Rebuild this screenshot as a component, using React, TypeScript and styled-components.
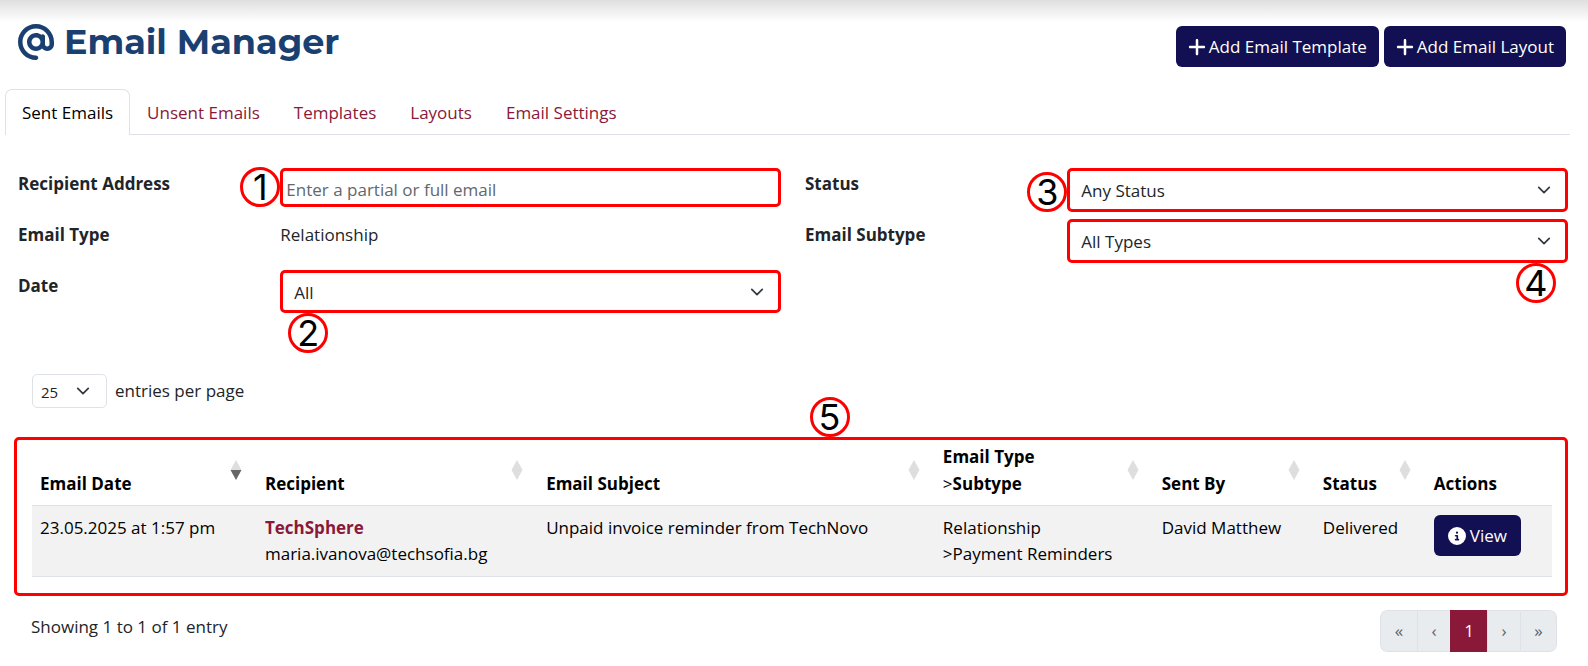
import React from "react";
import styled, { createGlobalStyle, css } from "styled-components";
import { FaAt, FaCircleInfo, FaPlus } from "react-icons/fa6";

const NAVY = "#121052";
const WINE = "#8a1839";
const LINE = "#dee2e6";
const MARK = "#fe0000";

const GlobalStyle = createGlobalStyle`
  *, *::before, *::after { box-sizing: border-box; }
  body {
    margin: 0;
    background: #fff;
    color: #212529;
    font: 400 17px/26px "Segoe UI", "Open Sans", "Noto Sans", sans-serif;
  }
  button, input, select { font: inherit; color: inherit; }
`;

const Page = styled.main`
  padding: 26px 18px 14px 5px;
  background: linear-gradient(#dfdfdf, #fff) top / 100% 22px no-repeat;
`;

const Header = styled.header`
  display: flex;
  justify-content: space-between;
  align-items: flex-start;
  padding: 0 4px 0 13px;
`;

const Title = styled.h1`
  display: flex;
  align-items: center;
  gap: 10px;
  margin: 0;
  height: 32px;
  color: #1a4072;
  font: 700 35px/32px Montserrat, Inter, sans-serif;
`;

const ButtonGroup = styled.div`
  display: flex;
  gap: 5px;
`;

const PrimaryButton = styled.button`
  display: inline-flex;
  align-items: center;
  gap: 4px;
  height: 41px;
  padding: 0 14px;
  border: 0;
  border-radius: 6px;
  background: ${NAVY};
  color: #fff;
  white-space: nowrap;
  cursor: pointer;
`;

const AddButton = styled(PrimaryButton)`
  gap: 2px;
  padding: 0 12px 0 11px;
`;

const Tabs = styled.nav`
  display: flex;
  margin-top: 22px;
  border-bottom: 1px solid ${LINE};
`;

const Tab = styled.a<{ $active?: boolean }>`
  margin-bottom: -1px;
  padding: 10px 16px 9px;
  border: 1px solid transparent;
  border-bottom: 0;
  border-radius: 7px 7px 0 0;
  color: ${WINE};
  text-decoration: none;
  ${(p) =>
    p.$active &&
    css`
      border-color: ${LINE};
      background: #fff;
      color: #000;
    `}
`;

const Filters = styled.form`
  display: grid;
  grid-template-columns: repeat(12, minmax(0, 1fr));
  grid-auto-rows: 44px;
  gap: 7px 24px;
  padding: 33px 2px 0 13px;
`;

const labelStyle = css`
  grid-column: span 2;
  padding-top: 3px;
  font-weight: 700;
`;
const FieldLabel = styled.label`
  ${labelStyle}
`;
const FieldName = styled.span`
  ${labelStyle}
`;

const FieldValue = styled.span`
  grid-column: span 4;
  padding-top: 3px;
`;

const Field = styled.div<{ $height: number }>`
  position: relative;
  grid-column: span 4;
  height: ${(p) => p.$height}px;
`;

const control = css`
  display: block;
  width: 100%;
  height: 100%;
  margin: 0;
  border: 3px solid ${MARK};
  border-radius: 5px;
  background: #fff;
  outline: 0;
`;

const TextInput = styled.input`
  ${control}
  padding: 4px 3px 0;
  &::placeholder {
    color: #62676c;
    opacity: 1;
  }
`;

const Select = styled.select`
  ${control}
  appearance: none;
  padding: 2px 36px 0 11px;
`;

const ChevronIcon = styled.svg`
  position: absolute;
  top: 50%;
  right: 17px;
  width: 14px;
  height: 14px;
  margin-top: -7px;
  fill: none;
  stroke: #343a40;
  stroke-width: 2;
  stroke-linecap: round;
  stroke-linejoin: round;
  pointer-events: none;
`;

const Chevron = () => (
  <ChevronIcon viewBox="0 0 16 16" aria-hidden="true">
    <path d="m2 5 6 6 6-6" />
  </ChevronIcon>
);

type Spot = "left" | "leftLow" | "below" | "belowEnd" | "above";

const spots: Record<Spot, ReturnType<typeof css>> = {
  left: css`
    right: 100%;
    top: -1px;
  `,
  leftLow: css`
    right: 100%;
    bottom: 0;
  `,
  below: css`
    left: 8px;
    top: 100%;
  `,
  belowEnd: css`
    right: 12px;
    top: 100%;
  `,
  above: css`
    left: 51.2%;
    bottom: 100%;
    margin-bottom: 3px;
  `,
};

const Callout = styled.span<{ $spot: Spot }>`
  position: absolute;
  display: flex;
  align-items: center;
  justify-content: center;
  width: 40px;
  height: 40px;
  border: 3px solid ${MARK};
  border-radius: 50%;
  color: #000;
  font: 400 36px/36px Inter, sans-serif;
  ${(p) => spots[p.$spot]}
`;

const PageSize = styled.div`
  display: flex;
  align-items: center;
  gap: 8px;
  margin-top: 60px;
  padding-left: 27px;
`;

const PageSizeBox = styled.div`
  position: relative;
  width: 75px;
  height: 34px;
`;

const PageSizeSelect = styled.select`
  width: 100%;
  height: 100%;
  padding: 1px 0 0 8px;
  border: 1px solid ${LINE};
  border-radius: 5px;
  background: #fff;
  font-size: 15px;
  appearance: none;
`;

const Results = styled.section`
  position: relative;
  margin: 29px 2px 0 9px;
  padding: 0 13px 16px 15px;
  border: 3px solid ${MARK};
  border-radius: 5px;
`;

const Table = styled.table`
  width: 100%;
  border-collapse: collapse;
  table-layout: fixed;
  color: #000;
`;

const HeadCell = styled.th<{ $width: number }>`
  position: relative;
  width: ${(p) => p.$width}%;
  padding: 3px 8px 8px;
  border-bottom: 1px solid ${LINE};
  font-weight: 700;
  line-height: 27px;
  text-align: left;
  vertical-align: bottom;
`;

const Caret = styled.span`
  font-size: 17px;
  font-weight: 400;
`;

const Cell = styled.td`
  padding: 9px 8px;
  border-bottom: 1px solid ${LINE};
  background: #f2f2f2;
  vertical-align: top;
`;

const Company = styled.a`
  display: block;
  color: ${WINE};
  font-weight: 700;
  text-decoration: none;
`;

const SortButton = styled.button`
  position: absolute;
  right: 15px;
  bottom: 25px;
  display: block;
  padding: 0;
  border: 0;
  background: none;
  cursor: pointer;
  svg {
    display: block;
  }
`;

const Footer = styled.footer`
  display: flex;
  justify-content: space-between;
  align-items: flex-start;
  padding: 14px 13px 0 26px;
`;

const Summary = styled.p`
  margin: 4px 0 0;
`;

const Pagination = styled.nav`
  display: flex;
  overflow: hidden;
  border-radius: 7px;
`;

const PageButton = styled.button<{ $current?: boolean; $wide?: boolean }>`
  width: ${(p) => (p.$wide ? 37 : 33)}px;
  height: 42px;
  padding: 0;
  border: 1px solid ${LINE};
  border-right-width: 0;
  background: #e9ecef;
  color: #5c6268;
  &:first-child {
    border-radius: 7px 0 0 7px;
  }
  &:last-child {
    border-right-width: 1px;
    border-radius: 0 7px 7px 0;
  }
  ${(p) =>
    p.$current &&
    css`
      border-color: ${WINE};
      background: ${WINE};
      color: #fff;
    `}
`;

const columns = [
  { name: "Email Date", width: 14.8, sort: "down" },
  { name: "Recipient", width: 18.5, sort: "none" },
  { name: "Email Subject", width: 26.1, sort: "none" },
  { name: "Email Type", second: "Subtype", width: 14.4, sort: "none" },
  { name: "Sent By", width: 10.6, sort: "none" },
  { name: "Status", width: 7.3, sort: "none" },
  { name: "Actions", width: 8.3 },
];

const tabs = ["Sent Emails", "Unsent Emails", "Templates", "Layouts", "Email Settings"];

export default function App() {
  return (
    <>
      <GlobalStyle />
      <Page>
        <Header>
          <Title>
            <FaAt size={36} aria-hidden="true" />
            Email Manager
          </Title>
          <ButtonGroup>
            <AddButton type="button">
              <FaPlus size={20} aria-hidden="true" />
              Add Email Template
            </AddButton>
            <AddButton type="button">
              <FaPlus size={20} aria-hidden="true" />
              Add Email Layout
            </AddButton>
          </ButtonGroup>
        </Header>

        <Tabs>
          {tabs.map((name, i) => (
            <Tab key={name} href="#" $active={i === 0}>
              {name}
            </Tab>
          ))}
        </Tabs>

        <Filters>
          <FieldLabel htmlFor="recipient">Recipient Address</FieldLabel>
          <Field $height={39}>
            <TextInput id="recipient" type="text" placeholder="Enter a partial or full email" />
            <Callout $spot="left">1</Callout>
          </Field>
          <FieldLabel htmlFor="status">Status</FieldLabel>
          <Field $height={44}>
            <Select id="status">
              <option>Any Status</option>
            </Select>
            <Chevron />
            <Callout $spot="leftLow">3</Callout>
          </Field>
          <FieldName>Email Type</FieldName>
          <FieldValue>Relationship</FieldValue>
          <FieldLabel htmlFor="subtype">Email Subtype</FieldLabel>
          <Field $height={44}>
            <Select id="subtype">
              <option>All Types</option>
            </Select>
            <Chevron />
            <Callout $spot="belowEnd">4</Callout>
          </Field>
          <FieldLabel htmlFor="date">Date</FieldLabel>
          <Field $height={43}>
            <Select id="date">
              <option>All</option>
            </Select>
            <Chevron />
            <Callout $spot="below">2</Callout>
          </Field>
        </Filters>

        <PageSize>
          <PageSizeBox>
            <PageSizeSelect id="page-size">
              <option>25</option>
            </PageSizeSelect>
            <Chevron />
          </PageSizeBox>
          <label htmlFor="page-size">entries per page</label>
        </PageSize>

        <Results>
          <Callout $spot="above">5</Callout>
          <Table>
            <thead>
              <tr>
                {columns.map((c) => (
                  <HeadCell key={c.name} $width={c.width} scope="col">
                    {c.name}
                    {c.second && (
                      <>
                        <br />
                        <Caret>&gt;</Caret>
                        {c.second}
                      </>
                    )}
                    {c.sort && (
                      <SortButton type="button" aria-label={`Sort by ${c.name}`}>
                        <svg width="12" height="20" viewBox="0 0 12 20">
                          <path d="M6 0l5.5 10H.5z" fill="#dedede" />
                          <path d="M6 20L.5 10h11z" fill={c.sort === "down" ? "#666" : "#dedede"} />
                        </svg>
                      </SortButton>
                    )}
                  </HeadCell>
                ))}
              </tr>
            </thead>
            <tbody>
              <tr>
                <Cell>23.05.2025 at 1:57 pm</Cell>
                <Cell>
                  <Company href="#">TechSphere</Company>
                  maria.ivanova@techsofia.bg
                </Cell>
                <Cell>Unpaid invoice reminder from TechNovo</Cell>
                <Cell>
                  Relationship
                  <br />
                  <Caret>&gt;</Caret>Payment Reminders
                </Cell>
                <Cell>David Matthew</Cell>
                <Cell>Delivered</Cell>
                <Cell>
                  <PrimaryButton type="button">
                    <FaCircleInfo size={18} aria-hidden="true" />
                    View
                  </PrimaryButton>
                </Cell>
              </tr>
            </tbody>
          </Table>
        </Results>

        <Footer>
          <Summary>Showing 1 to 1 of 1 entry</Summary>
          <Pagination aria-label="Pages">
            <PageButton type="button" $wide>«</PageButton>
            <PageButton type="button">‹</PageButton>
            <PageButton type="button" $wide $current>1</PageButton>
            <PageButton type="button">›</PageButton>
            <PageButton type="button" $wide>»</PageButton>
          </Pagination>
        </Footer>
      </Page>
    </>
  );
}
